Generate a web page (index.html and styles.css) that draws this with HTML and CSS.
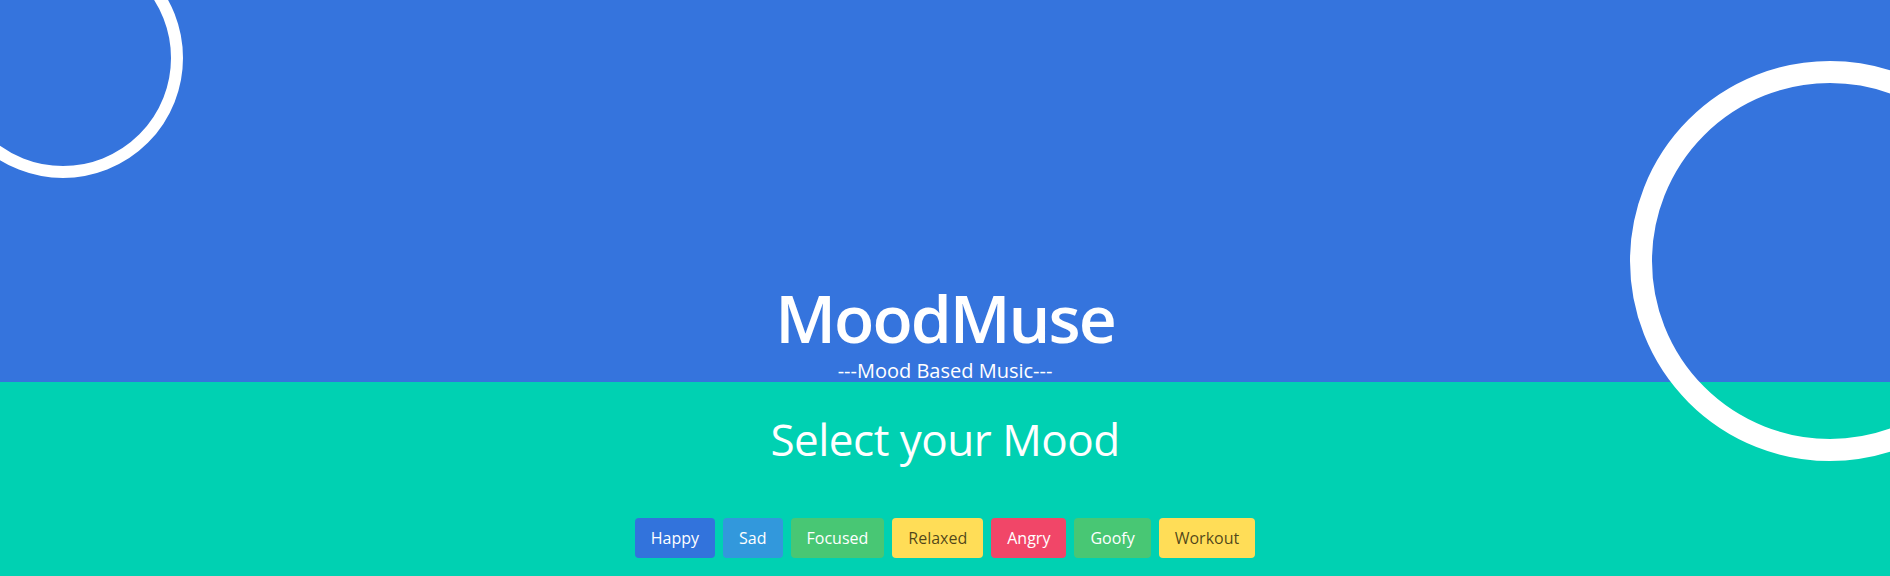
FILE: index.html
```html
<!DOCTYPE html>
<html lang="en">
<head>
<meta charset="utf-8">
<title>MoodMuse</title>
<link rel="stylesheet" href="styles.css">
</head>
<body>
<div class="page">
  <header class="hero">
    <h1 class="title">MoodMuse</h1>
    <p class="subtitle">---Mood Based Music---</p>
  </header>
  <section class="moods">
    <h2 class="moods-title">Select your Mood</h2>
    <div class="buttons">
      <button class="btn btn-link">Happy</button>
      <button class="btn btn-info">Sad</button>
      <button class="btn btn-success">Focused</button>
      <button class="btn btn-warning">Relaxed</button>
      <button class="btn btn-danger">Angry</button>
      <button class="btn btn-success">Goofy</button>
      <button class="btn btn-warning">Workout</button>
    </div>
  </section>
  <div class="ring ring-left"></div>
  <div class="ring ring-right"></div>
</div>
</body>
</html>
```
FILE: styles.css
```css
html, body {
  margin: 0;
  padding: 0;
}
body {
  font-family: "Open Sans", "Noto Sans", sans-serif;
  background: #00d1b2;
  overflow: hidden;
}
.page {
  position: relative;
  width: 1890px;
  height: 576px;
  overflow: hidden;
}
.hero {
  height: 382px;
  background: #3574dd;
  display: flex;
  flex-direction: column;
  justify-content: flex-end;
  align-items: center;
  color: #fff;
}
.title {
  margin: 0;
  font-size: 66px;
  font-weight: 600;
  line-height: 1;
  letter-spacing: -2px;
}
.subtitle {
  margin: 9px 0 0;
  font-size: 20px;
  line-height: 23px;
}
.moods {
  background: #00d1b2;
  display: flex;
  flex-direction: column;
  align-items: center;
  padding-top: 35px;
  color: #fff;
}
.moods-title {
  margin: 0;
  font-size: 44px;
  font-weight: 400;
  line-height: 1;
  letter-spacing: -0.5px;
}
.buttons {
  margin-top: 57px;
  display: flex;
  gap: 8px;
}
.btn {
  height: 40px;
  padding: 0 15px;
  border: 1px solid transparent;
  border-radius: 4px;
  font-family: inherit;
  font-size: 16px;
  color: #fff;
  cursor: pointer;
}
.btn-link { background: #3273dc; }
.btn-info { background: #3298dc; }
.btn-success { background: #48c774; }
.btn-warning { background: #ffdd57; color: rgba(0,0,0,0.7); }
.btn-danger { background: #f14668; }
.ring {
  position: absolute;
  border-radius: 50%;
  border-style: solid;
  border-color: #fff;
  box-sizing: border-box;
}
.ring-left {
  left: -57px;
  top: -62px;
  width: 240px;
  height: 240px;
  border-width: 12px;
}
.ring-right {
  left: 1630px;
  top: 61px;
  width: 400px;
  height: 400px;
  border-width: 22px;
}
```
